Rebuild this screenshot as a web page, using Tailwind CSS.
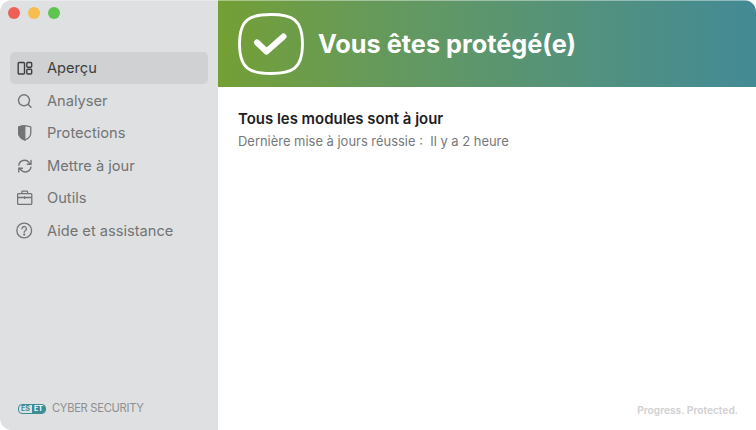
<!DOCTYPE html>
<html lang="fr">
<head>
  <meta charset="UTF-8">
  <title>ESET Cyber Security</title>
  <script src="https://cdn.jsdelivr.net/npm/@tailwindcss/browser@4"></script>
</head>
<body class="bg-white font-['Inter',sans-serif]">
  <div class="flex w-[756px] h-[430px] overflow-hidden rounded-[12px] bg-white">
    <!-- sidebar -->
    <div class="w-[218px] h-full flex flex-col bg-[#dfe0e2] border-t border-[#e9eaeb]">
      <div class="flex gap-[8px] pl-[8px] pt-[6px] h-[51px]">
        <span class="w-[12px] h-[12px] rounded-full bg-[#ee5f57]"></span>
        <span class="w-[12px] h-[12px] rounded-full bg-[#f6bd4f]"></span>
        <span class="w-[12px] h-[12px] rounded-full bg-[#5fc550]"></span>
      </div>
      <nav class="flex flex-col px-[10px] text-[14.650px] text-[#727475]">
        <a class="h-[32px] mb-[0.5px] flex items-center gap-[14px] pl-[7px] rounded-[5px] bg-[#d0d1d3] text-[#3c3e40]">
          <svg class="w-[16px] h-[16px] shrink-0" viewBox="0 0 16 16" fill="none" stroke="currentColor" stroke-width="1.400"><rect x="1.200" y="2.500" width="6.300" height="11.500" rx="1"/><rect x="9.800" y="2.500" width="4.900" height="4.800" rx="1"/><rect x="9.800" y="9.200" width="4.900" height="4.800" rx="1"/></svg>
          <span class="pt-[2px]">Aperçu</span>
        </a>
        <a class="h-[32px] mb-[0.5px] flex items-center gap-[14px] pl-[7px]">
          <svg class="w-[16px] h-[16px] shrink-0" viewBox="0 0 16 16" fill="none" stroke="currentColor" stroke-width="1.400" stroke-linecap="round"><circle cx="7" cy="7.300" r="5.500"/><path d="M11.200 11.500 14 14.300"/></svg>
          <span class="pt-[2px]">Analyser</span>
        </a>
        <a class="h-[32px] mb-[0.5px] flex items-center gap-[14px] pl-[7px]">
          <svg class="w-[16px] h-[16px] shrink-0" viewBox="0 0 16 16" fill="none" stroke="currentColor" stroke-width="1.300"><path d="M1.700 2C3.500 1.200 5.700 .8 7.800 .8S12 1.200 13.800 2v6c0 3.200-2.400 5.600-6 7-3.600-1.400-6.100-3.800-6.100-7z"/><path d="M7.800 .8C5.700 .8 3.500 1.200 1.700 2v6c0 3.200 2.500 5.600 6.100 7z" fill="currentColor"/></svg>
          <span class="pt-[2px]">Protections</span>
        </a>
        <a class="h-[32px] mb-[0.5px] flex items-center gap-[14px] pl-[7px]">
          <svg class="w-[16px] h-[16px] shrink-0" viewBox="0 0 16 16" fill="none" stroke="currentColor" stroke-width="1.400" stroke-linecap="round" stroke-linejoin="round"><path d="M1.800 7.200A5.800 5.800 0 0 1 12 4.400L13.700 6"/><path d="M14 9.200A5.800 5.800 0 0 1 3.800 11.800L2.100 10.200"/><path d="M14 2.400V6.200H10.400"/><path d="M1.800 14V10.200H5.400"/></svg>
          <span class="pt-[2px]">Mettre à jour</span>
        </a>
        <a class="h-[32px] mb-[0.5px] flex items-center gap-[14px] pl-[7px]">
          <svg class="w-[16px] h-[16px] shrink-0" viewBox="0 0 16 16" fill="none" stroke="currentColor" stroke-width="1.300"><rect x="0.600" y="3.600" width="14.200" height="10.800" rx="1"/><path d="M0.600 7.500H14.800M4.800 3.600V1.900a.7.7 0 0 1 .7-.7h4.400a.7.7 0 0 1 .7.700V3.600M7.700 6.200V9"/></svg>
          <span class="pt-[2px]">Outils</span>
        </a>
        <a class="h-[32px] flex items-center gap-[14px] pl-[7px]">
          <svg class="w-[16px] h-[16px] shrink-0 overflow-visible" viewBox="0 0 16 16" fill="none" stroke="currentColor" stroke-width="1.300" stroke-linecap="round"><circle cx="7.200" cy="7.500" r="7.400"/><path d="M5 5.700a2.200 2.200 0 1 1 3.500 1.800c-.9.500-1.300.9-1.300 1.800"/><circle cx="7.200" cy="11.600" r=".5" fill="currentColor"/></svg>
          <span class="pt-[2px]">Aide et assistance</span>
        </a>
      </nav>
      <div class="mt-auto mb-[13px] ml-[18px] flex items-center gap-[6px]">
        <span class="w-[28px] h-[10px] flex items-center rounded-[4px] border border-[#3d8c96] overflow-hidden text-[7px] leading-none font-bold">
          <span class="flex-1 text-center text-[#3d8c96]">ES</span>
          <span class="flex-1 h-full flex items-center justify-center bg-[#3d8c96] text-white">ET</span>
        </span>
        <span class="text-[11.200px] tracking-[-0.3px] text-[#8d8f90]">CYBER SECURITY</span>
      </div>
    </div>
    <!-- main -->
    <div class="flex-1 flex flex-col">
      <header class="h-[87px] flex items-center gap-[14px] pl-[20px] bg-gradient-to-r from-[#749f33] to-[#438a95] border-t border-white/40">
        <svg class="w-[66px] h-[62px] shrink-0" viewBox="0 0 66 62" fill="none" stroke="white">
          <path d="M33 1.500C54 1.500 64.500 6 64.500 31S54 60.500 33 60.500 1.500 56 1.500 31 12 1.500 33 1.500Z" stroke-width="2.800"/>
          <path d="M19 29.500 28.500 38.500 45.500 23.500" stroke-width="6" stroke-linecap="round" stroke-linejoin="round"/>
        </svg>
        <h1 class="text-[25.300px] font-bold text-white">Vous êtes protégé(e)</h1>
      </header>
      <section class="flex-1 flex flex-col pl-[20px] pt-[22px] relative">
        <h2 class="text-[14.950px] leading-[20px] font-semibold text-[#1d1d1f]">Tous les modules sont à jour</h2>
        <p class="mt-[3px] text-[12.950px] leading-[18px] text-[#77797a] whitespace-pre">Dernière mise à jours réussie :  Il y a 2 heure</p>
        <p class="mt-auto mb-[12px] mr-[18px] text-right text-[10.200px] font-semibold text-[#cfd0d1]">Progress. Protected.</p>
      </section>
    </div>
  </div>
</body>
</html>
